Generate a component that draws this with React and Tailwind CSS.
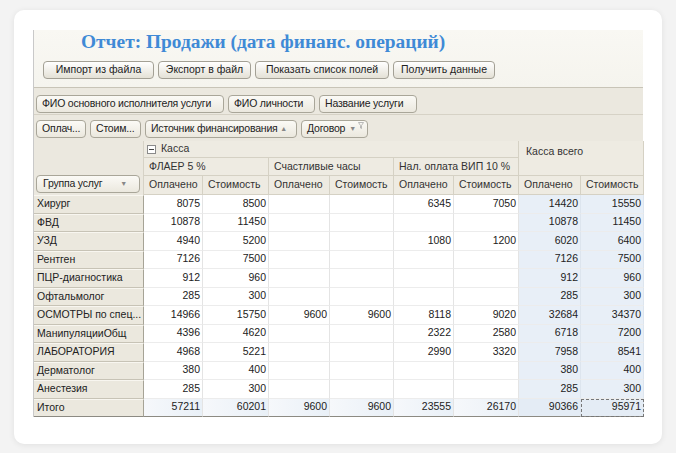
import React from 'react'

const UI_FONT = { fontFamily: '"Liberation Sans", Arial, sans-serif' }

const COLS = 'grid grid-cols-[110px_59px_66px_61px_64px_60px_65px_62px_63px]'

const ROWS = [
  ['Хирург', 8075, 8500, '', '', 6345, 7050, 14420, 15550],
  ['ФВД', 10878, 11450, '', '', '', '', 10878, 11450],
  ['УЗД', 4940, 5200, '', '', 1080, 1200, 6020, 6400],
  ['Рентген', 7126, 7500, '', '', '', '', 7126, 7500],
  ['ПЦР-диагностика', 912, 960, '', '', '', '', 912, 960],
  ['Офтальмолог', 285, 300, '', '', '', '', 285, 300],
  ['ОСМОТРЫ по спец...', 14966, 15750, 9600, 9600, 8118, 9020, 32684, 34370],
  ['МанипуляцииОбщ', 4396, 4620, '', '', 2322, 2580, 6718, 7200],
  ['ЛАБОРАТОРИЯ', 4968, 5221, '', '', 2990, 3320, 7958, 8541],
  ['Дерматолог', 380, 400, '', '', '', '', 380, 400],
  ['Анестезия', 285, 300, '', '', '', '', 285, 300],
]

const TOTAL = ['Итого', 57211, 60201, 9600, 9600, 23555, 26170, 90366, 95971]

function Btn({ w, children, className = '' }) {
  return (
    <div
      className={`h-[18px] ${w} shrink-0 rounded-[4px] border border-[#a3a095] bg-linear-to-b from-white to-[#e4e1d6] flex items-center justify-center text-[10.5px] text-[#222] whitespace-nowrap ${className}`}
    >
      {children}
    </div>
  )
}

function FieldBtn({ w, children, className = '' }) {
  return (
    <div
      className={`h-[18px] ${w} shrink-0 rounded-[4px] border border-[#a9a699] bg-linear-to-b from-[#fbfaf6] to-[#ebe8de] flex items-center px-[5px] text-[10.5px] tracking-[-0.2px] text-[#222] whitespace-nowrap ${className}`}
    >
      {children}
    </div>
  )
}

function HeadCell({ children, className = '' }) {
  return (
    <div className={`border-r border-b border-[#d5d1c4] bg-[#eeebe2] px-[5px] text-[10.5px] text-[#333] flex items-center whitespace-nowrap overflow-hidden ${className}`}>
      {children}
    </div>
  )
}

function DataRow({ row, total }) {
  return (
    <div className={`${COLS} h-[18.5px]`}>
      <div className={`border-r border-[#a6a396] border-b ${total ? 'border-b-[#8c8a82]' : 'border-b-[#c7c3b6]'} border-t border-t-[#f8f6f0] bg-[#ebe8de] pl-[3px] flex items-center text-[10.5px] text-[#222] whitespace-nowrap overflow-hidden`}>
        {row[0]}
      </div>
      {row.slice(1).map((v, i) => {
        const kassa = i >= 6
        let bg = 'bg-white'
        if (kassa) bg = 'bg-[#e8eff7]'
        if (total) bg = kassa ? 'bg-[#e4ecf5]' : 'bg-linear-to-r from-[#f6f8fb] to-[#e9f0f7]'
        const focus = total && i === 7
        return (
          <div
            key={i}
            className={`${bg} border-r ${kassa ? 'border-[#dde5ee]' : 'border-[#e4e4e4]'} border-b ${total ? 'border-b-[#8c8a82]' : 'border-b-[#ececec]'} flex items-center justify-end pr-[2px] text-[10.5px] text-[#222] ${focus ? 'outline-1 outline-dashed outline-[#777] -outline-offset-1' : ''}`}
          >
            {v}
          </div>
        )
      })}
    </div>
  )
}

export default function App() {
  return (
    <div className="w-[676px] h-[453px] bg-[#f3f3f3] pt-[10px] pl-[14px] overflow-hidden" style={UI_FONT}>
      <div className="w-[648px] h-[434px] bg-white rounded-[10px] shadow-[0_1px_6px_rgba(0,0,0,0.08)] pt-[20px] pl-[19px] overflow-hidden">
        <div className="w-[610px] border-l border-[#c9c9c9]">
          {/* top: title + actions */}
          <div className="bg-linear-to-b from-[#f9f8f3] to-[#f5f4ee] border-b border-[#c8c4b7]">
            <div
              className="h-[27px] pl-[47px] pt-[1px] text-[19.4px] leading-[22px] font-bold text-[#3f8ad6] whitespace-nowrap"
              style={{ fontFamily: '"Liberation Serif", "Times New Roman", serif' }}
            >
              Отчет: Продажи (дата финанс. операций)
            </div>
            <div className="flex gap-[4px] pl-[9px] mt-[4px] pb-[8px]">
              <Btn w="w-[111px]">Импорт из файла</Btn>
              <Btn w="w-[93px]">Экспорт в файл</Btn>
              <Btn w="w-[134px]">Показать список полей</Btn>
              <Btn w="w-[102px]">Получить данные</Btn>
            </div>
          </div>

          {/* filter area */}
          <div className="bg-[#ebe8df] h-[27px] pt-[7px] pl-[2px] flex gap-[4px] border-b border-[#d6d2c6]">
            <FieldBtn w="w-[188px]">ФИО основного исполнителя услуги</FieldBtn>
            <FieldBtn w="w-[87px]">ФИО личности</FieldBtn>
            <FieldBtn w="w-[98px]">Название услуги</FieldBtn>
          </div>
          <div className="bg-[#ebe8df] h-[26px] pt-[5px] pl-[2px] flex gap-[4px]">
            <FieldBtn w="w-[50px]">Оплач...</FieldBtn>
            <FieldBtn w="w-[51px]">Стоим...</FieldBtn>
            <FieldBtn w="w-[152px]" className="justify-between pr-[9px]">
              <span>Источник финансирования</span>
              <span className="text-[7px] text-[#888]">▲</span>
            </FieldBtn>
            <FieldBtn w="w-[67px]" className="relative">
              <span>Договор</span>
              <span className="ml-[4px] text-[7px] text-[#888]">▼</span>
              <svg className="absolute top-[1px] right-[3px]" width="6" height="7" viewBox="0 0 6 7">
                <path d="M0.5 0.5h5L3.5 3.5v3L2.5 6V3.5z" fill="none" stroke="#aaa" strokeWidth="0.8" />
              </svg>
            </FieldBtn>
          </div>

          {/* header */}
          <div className={`${COLS} grid-rows-[17px_18px_19px]`}>
            <div className="row-span-3 bg-[#ebe8df] border-r border-[#d6d2c6] flex items-end pl-[2px] pb-[2px]">
              <FieldBtn w="w-[104px]" className="justify-between pl-[6px] pr-[12px]">
                <span>Группа услуг</span>
                <span className="text-[7px] text-[#888]">▼</span>
              </FieldBtn>
            </div>
            <HeadCell className="col-span-6 pl-[3px] gap-[5px]">
              <span className="w-[9px] h-[9px] border border-[#8a8a8a] bg-white flex items-center justify-center">
                <span className="w-[5px] h-px bg-[#444]" />
              </span>
              <span>Касса</span>
            </HeadCell>
            <HeadCell className="col-span-2 row-span-2 items-start pt-[3px] pl-[7px]">Касса всего</HeadCell>
            <HeadCell className="col-span-2">ФЛАЕР 5 %</HeadCell>
            <HeadCell className="col-span-2">Счастливые часы</HeadCell>
            <HeadCell className="col-span-2">Нал. оплата ВИП 10 %</HeadCell>
            <HeadCell>Оплачено</HeadCell>
            <HeadCell>Стоимость</HeadCell>
            <HeadCell>Оплачено</HeadCell>
            <HeadCell>Стоимость</HeadCell>
            <HeadCell>Оплачено</HeadCell>
            <HeadCell>Стоимость</HeadCell>
            <HeadCell>Оплачено</HeadCell>
            <HeadCell>Стоимость</HeadCell>
          </div>

          {/* body */}
          {ROWS.map((r) => (
            <DataRow key={r[0]} row={r} />
          ))}
          <DataRow row={TOTAL} total />
        </div>
      </div>
    </div>
  )
}
